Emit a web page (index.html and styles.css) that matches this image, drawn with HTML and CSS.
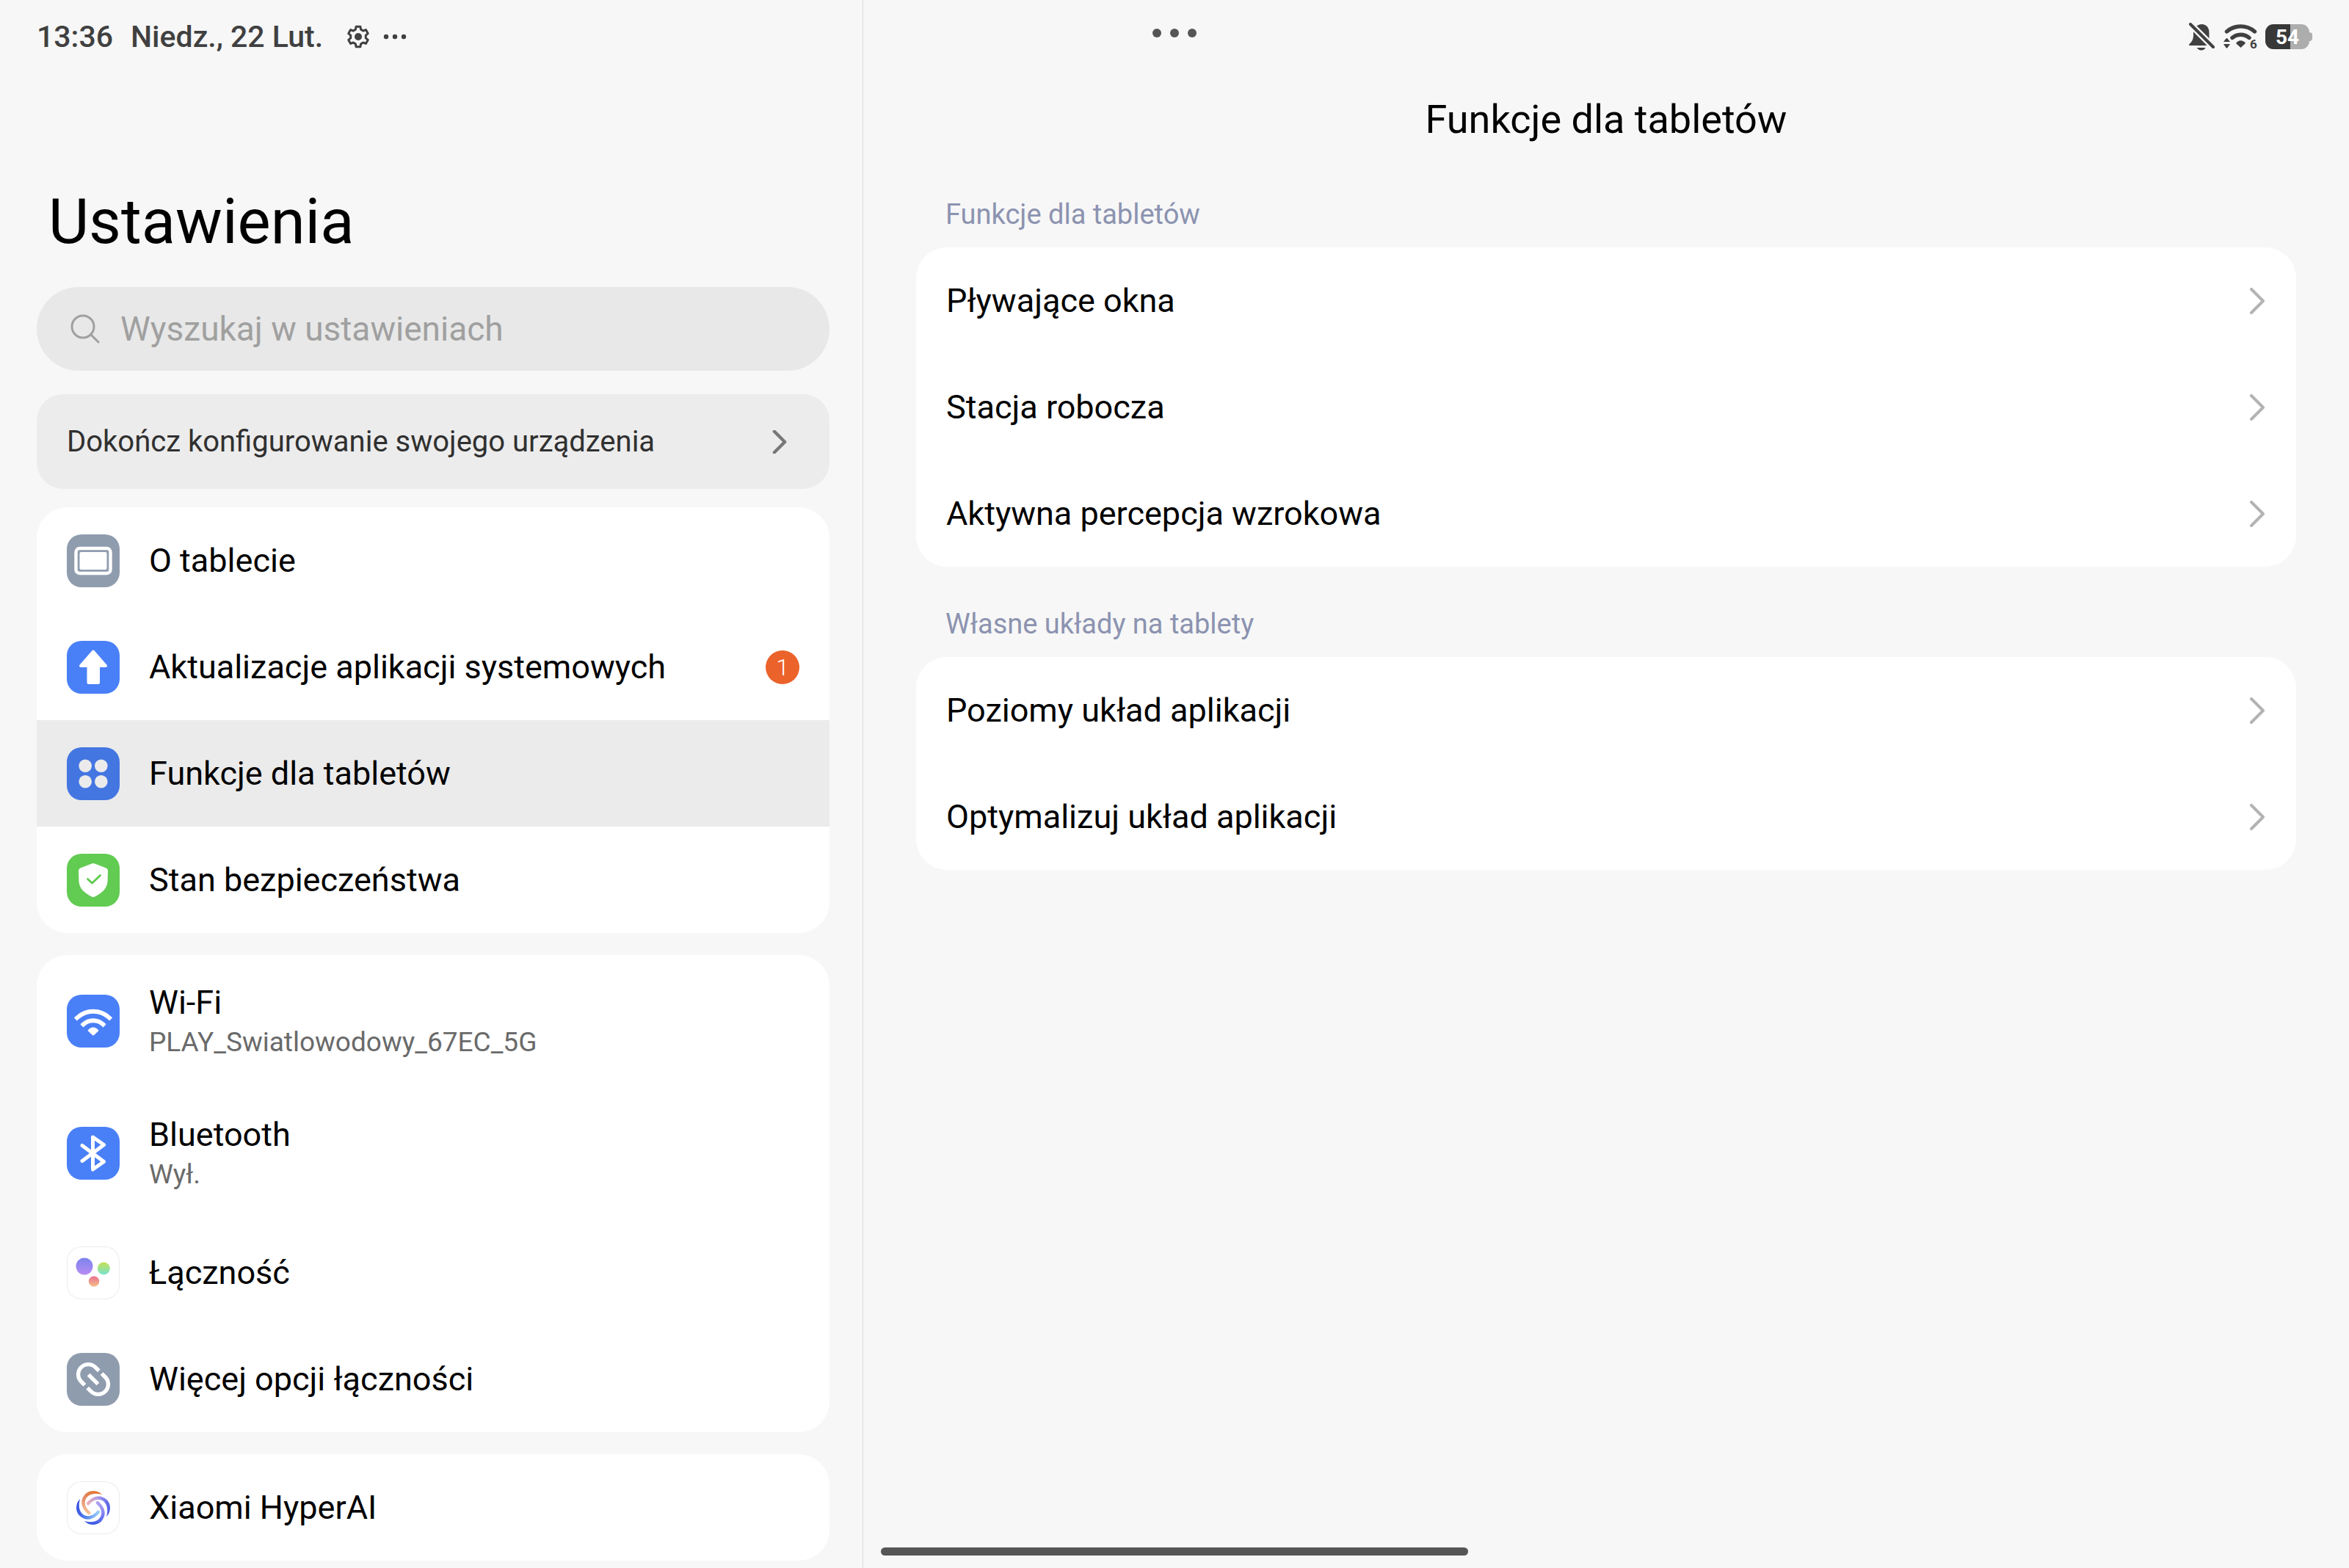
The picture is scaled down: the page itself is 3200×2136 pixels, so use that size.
FILE: index.html
```
<!DOCTYPE html>
<html lang="pl">
<head>
  <meta charset="UTF-8">
  <meta name="viewport" content="width=device-width, initial-scale=1.0">
  <title>Ustawienia</title>
  <link rel="stylesheet" href="styles.css">
</head>
<body>
  <!-- Shared shapes -->
  <svg class="defs" aria-hidden="true">
    <symbol id="chevron" viewBox="0 0 20 36">
      <path d="M2 2L18 18L2 34" fill="none" stroke="currentColor" stroke-linecap="round" stroke-linejoin="round"/>
    </symbol>
  </svg>

  <!-- Left panel -->
  <aside class="sidebar">
    <div class="status">
      <time class="clock">13:36</time>
      <span class="date">Niedz., 22 Lut.</span>
      <svg class="status-gear" viewBox="-16 -16 32 32" aria-hidden="true">
        <path d="M-2.9-13.7H2.9L3.6-9.9L6.7-8L10.4-9.4L13.3-4.3L10.3-1.8V1.8L13.3 4.3L10.4 9.4L6.7 8L3.6 9.9L2.9 13.7H-2.9L-3.6 9.9L-6.7 8L-10.4 9.4L-13.3 4.3L-10.3 1.8V-1.8L-13.3-4.3L-10.4-9.4L-6.7-8L-3.6-9.9Z" fill="none" stroke="currentColor" stroke-width="3" stroke-linejoin="round"/>
        <circle r="5" fill="currentColor"/>
      </svg>
      <svg class="status-more" viewBox="0 0 32 8" aria-hidden="true">
        <circle cx="4" cy="4" r="3.2" fill="currentColor"/>
        <circle cx="16" cy="4" r="3.2" fill="currentColor"/>
        <circle cx="28" cy="4" r="3.2" fill="currentColor"/>
      </svg>
    </div>

    <h1>Ustawienia</h1>

    <label class="search">
      <svg class="search-icon" viewBox="0 0 40 40" aria-hidden="true">
        <circle cx="17" cy="17" r="15" fill="none" stroke="currentColor" stroke-width="3"/>
        <path d="M28 28L38 38" stroke="currentColor" stroke-width="3" stroke-linecap="round"/>
      </svg>
      <input type="search" placeholder="Wyszukaj w ustawieniach" aria-label="Wyszukaj w ustawieniach">
    </label>

    <a class="setup" href="#">
      <span>Dokończ konfigurowanie swojego urządzenia</span>
      <svg class="setup-chevron" aria-hidden="true"><use href="#chevron"/></svg>
    </a>

    <nav>
      <div class="card">
        <a class="row" href="#">
          <svg class="icon gray" viewBox="0 0 72 72" aria-hidden="true">
            <rect x="12.5" y="19" width="47" height="34" rx="5" fill="none" stroke="#fff" stroke-width="4.4"/>
            <rect x="17.5" y="24" width="37" height="24" rx="2" fill="#fff"/>
          </svg>
          <span class="label">O tablecie</span>
        </a>
        <a class="row" href="#">
          <svg class="icon blue" viewBox="0 0 72 72" aria-hidden="true">
            <path d="M36 14.5L53 34H43V57H29.5V34H19Z" fill="#fff" stroke="#fff" stroke-width="4" stroke-linejoin="round"/>
          </svg>
          <span class="label">Aktualizacje aplikacji systemowych</span>
          <span class="badge">1</span>
        </a>
        <a class="row selected" href="#" aria-current="page">
          <svg class="icon blue-dark" viewBox="0 0 72 72" aria-hidden="true">
            <g fill="#ebebeb">
              <circle cx="25.2" cy="25.2" r="8.8"/>
              <circle cx="46.8" cy="25.2" r="8.8"/>
              <circle cx="25.2" cy="46.8" r="8.8"/>
              <circle cx="46.8" cy="46.8" r="8.8"/>
            </g>
          </svg>
          <span class="label">Funkcje dla tabletów</span>
        </a>
        <a class="row" href="#">
          <svg class="icon green" viewBox="0 0 72 72" aria-hidden="true">
            <path d="M34 13.6Q36 12.6 38 13.6L53 19.2Q56 20.4 56 23.5L55.6 37C55.2 48 47 54 38 58.4Q36 59.4 34 58.4C25 54 16.8 48 16.4 37L16 23.5Q16 20.4 19 19.2Z" fill="#fff"/>
            <path d="M28.5 34.5L34.5 40L45.5 29.5" fill="none" stroke="#62cb52" stroke-width="3" stroke-linecap="round" stroke-linejoin="round"/>
          </svg>
          <span class="label">Stan bezpieczeństwa</span>
        </a>
      </div>

      <div class="card">
        <a class="row tall" href="#">
          <svg class="icon blue" viewBox="0 0 72 72" aria-hidden="true">
            <path d="M14 31.5A32 32 0 0 1 58 31.5M22.500 40.500A20 20 0 0 1 49.500 40.500" fill="none" stroke="#fff" stroke-width="5.8" stroke-linecap="square"/>
            <path d="M28.500 49C32 43 40 43 43.500 49L37.500 54.800Q36 56 34.500 54.800Z" fill="#fff"/>
          </svg>
          <span class="label">Wi-Fi<small>PLAY_Swiatlowodowy_67EC_5G</small></span>
        </a>
        <a class="row tall" href="#">
          <svg class="icon blue" viewBox="0 0 72 72" aria-hidden="true">
            <path d="M21 25.500L50.500 47.500L35.500 58V14L50.500 24.500L21 46.500" fill="none" stroke="#fff" stroke-width="5" stroke-linecap="round" stroke-linejoin="round"/>
          </svg>
          <span class="label">Bluetooth<small>Wył.</small></span>
        </a>
        <a class="row" href="#">
          <svg class="icon outlined" viewBox="0 0 72 72" aria-hidden="true">
            <defs>
              <linearGradient id="violet" x2="0" y2="1"><stop stop-color="#7b83ec"/><stop offset="1" stop-color="#b88cf5"/></linearGradient>
              <linearGradient id="lime" x2="0" y2="1"><stop stop-color="#c6e052"/><stop offset="1" stop-color="#74e3d0"/></linearGradient>
              <linearGradient id="coral" x2="0" y2="1"><stop stop-color="#e9708f"/><stop offset="1" stop-color="#f5c08a"/></linearGradient>
            </defs>
            <circle cx="24" cy="27" r="11.5" fill="url(#violet)"/>
            <circle cx="50.3" cy="30" r="8.5" fill="url(#lime)"/>
            <circle cx="37" cy="47.6" r="7.2" fill="url(#coral)"/>
          </svg>
          <span class="label">Łączność</span>
        </a>
        <a class="row" href="#">
          <svg class="icon gray" viewBox="0 0 72 72" aria-hidden="true">
            <g fill="none" stroke="#fff" stroke-width="5.4">
              <path d="M43.8 24.4L39 19.6A13.7 13.7 0 0 0 19.6 39L24.4 43.8"/>
              <path d="M47.6 28.2L52.4 33A13.7 13.7 0 0 1 33 52.4L28.2 47.6"/>
              <path d="M29.6 29.600L42.400 42.400"/>
            </g>
          </svg>
          <span class="label">Więcej opcji łączności</span>
        </a>
      </div>

      <div class="card">
        <a class="row" href="#">
          <svg class="icon outlined" viewBox="0 0 72 72" aria-hidden="true">
            <defs>
              <linearGradient id="arm-orange" x1=".6" y1="0" x2=".4" y2="1"><stop stop-color="#e2762e"/><stop offset=".4" stop-color="#e58d6c"/><stop offset="1" stop-color="#f7c49a"/></linearGradient>
              <linearGradient id="arm-pink" x1=".6" y1="0" x2=".4" y2="1"><stop stop-color="#4a5be6"/><stop offset=".5" stop-color="#9c93ec"/><stop offset="1" stop-color="#f0b3b3"/></linearGradient>
              <linearGradient id="arm-violet" x1=".6" y1="0" x2=".4" y2="1"><stop stop-color="#3858e0"/><stop offset=".5" stop-color="#7a7ff0"/><stop offset="1" stop-color="#b3a5f0"/></linearGradient>
              <linearGradient id="arm-blue" x1=".6" y1="0" x2=".4" y2="1"><stop stop-color="#3a50e0"/><stop offset=".5" stop-color="#5487ee"/><stop offset="1" stop-color="#9fd3fa"/></linearGradient>
              <path id="arm" d="M12-18C7-24-5-25-11-18.500C-18.500-10-17-1-7.500 8.500A2.200 2.200 0 0 0-4.300 5.300C-12.500-1-13-9.500-8-15C-3-20 5-20 12-18Z"/>
            </defs>
            <g transform="translate(36 36)">
              <use href="#arm" fill="url(#arm-orange)"/>
              <use href="#arm" fill="url(#arm-pink)" transform="rotate(90)"/>
              <use href="#arm" fill="url(#arm-violet)" transform="rotate(180)"/>
              <use href="#arm" fill="url(#arm-blue)" transform="rotate(270)"/>
            </g>
          </svg>
          <span class="label">Xiaomi HyperAI</span>
        </a>
      </div>
    </nav>
  </aside>

  <!-- Right panel -->
  <main class="content">
    <div class="status status-end">
      <svg class="status-bell" viewBox="0 0 36 38" aria-hidden="true">
        <path d="M17.5 2C24 2 27.5 7 27.5 13V21L29 31H1.5C-.5 31 0 29.5 1 28.5C4.5 25 6 22 6 17V13C6 7 11 2 17.5 2Z" fill="currentColor"/>
        <path d="M11 34H22.5C21 38.5 12.5 38.5 11 34Z" fill="currentColor"/>
        <path d="M0 0L36 36" stroke="#f7f7f7" stroke-width="9"/>
        <path d="M2 2L33 33" stroke="currentColor" stroke-width="4" stroke-linecap="round"/>
      </svg>
      <svg class="status-wifi" viewBox="0 0 46 36" aria-label="Wi-Fi 6">
        <path d="M4.500 11A29 29 0 0 1 42.500 11M12 19.500A17.500 17.500 0 0 1 35 19.500" fill="none" stroke="currentColor" stroke-width="5.4" stroke-linecap="round"/>
        <path d="M17 27C20 22 27 22 30 27L23.500 33Z" fill="currentColor"/>
        <path d="M0 25L3.500 20.500Q4.500 19.500 5.500 20.500L9 25ZM0 28L3.500 33Q4.500 34 5.500 33L9 28Z" fill="currentColor"/>
        <text x="36" y="34" font-size="17" font-weight="700" fill="currentColor">6</text>
      </svg>
      <span class="battery">54</span>
    </div>

    <h2>Funkcje dla tabletów</h2>

    <section>
      <h3>Funkcje dla tabletów</h3>
      <div class="card">
        <a class="row" href="#"><span class="label">Pływające okna</span><svg class="chevron" aria-hidden="true"><use href="#chevron"/></svg></a>
        <a class="row" href="#"><span class="label">Stacja robocza</span><svg class="chevron" aria-hidden="true"><use href="#chevron"/></svg></a>
        <a class="row" href="#"><span class="label">Aktywna percepcja wzrokowa</span><svg class="chevron" aria-hidden="true"><use href="#chevron"/></svg></a>
      </div>
    </section>

    <section>
      <h3>Własne układy na tablety</h3>
      <div class="card">
        <a class="row" href="#"><span class="label">Poziomy układ aplikacji</span><svg class="chevron" aria-hidden="true"><use href="#chevron"/></svg></a>
        <a class="row" href="#"><span class="label">Optymalizuj układ aplikacji</span><svg class="chevron" aria-hidden="true"><use href="#chevron"/></svg></a>
      </div>
    </section>
  </main>

  <!-- System controls on top of both panels -->
  <button class="window-menu" type="button" aria-label="Menu okna"><i></i><i></i><i></i></button>
  <div class="home-bar"></div>
</body>
</html>
```
FILE: styles.css
```
/* Global Styles */
* {
  box-sizing: border-box;
}

body {
  font-family: Roboto, "Noto Sans", sans-serif;
  background: #f7f7f7;
  color: #000;
  margin: 0;
  height: 100vh;
  overflow: hidden;
  display: grid;
  grid-template-columns: 147fr 253fr;
  position: relative;
}

a {
  color: inherit;
  text-decoration: none;
}

h1,
h2,
h3 {
  font-weight: 400;
  margin: 0;
}

.defs {
  position: absolute;
  width: 0;
  height: 0;
}

/* Panels */
.sidebar {
  padding: 0 45px 0 50px;
  border-right: 1px solid #dcdcdc;
  overflow: hidden;
}

.content {
  padding: 0 72px;
}

/* Status Bar */
.status {
  display: flex;
  align-items: center;
  height: 100px;
  color: #404040;
  font-size: 41px;
  font-weight: 500;
}

.date {
  margin-left: 24px;
}

.status-gear {
  width: 32px;
  height: 32px;
  margin-left: 32px;
}

.status-more {
  width: 32px;
  height: 8px;
  margin-left: 18px;
}

.status-end {
  justify-content: flex-end;
  gap: 11px;
  margin-right: -22px;
}

.status-bell {
  width: 36px;
  height: 38px;
}

.status-wifi {
  width: 46px;
  height: 36px;
  overflow: visible;
}

.battery {
  position: relative;
  width: 60px;
  height: 34px;
  margin-right: 4px;
  border-radius: 11px;
  background: linear-gradient(90deg, #383838 34px, #adadad 34px);
  color: #fff;
  font-size: 28px;
  font-weight: 700;
  line-height: 35px;
  text-align: center;
}

.battery::after {
  content: "";
  position: absolute;
  left: 60px;
  top: 11px;
  width: 4px;
  height: 12px;
  border-radius: 0 4px 4px 0;
  background: #adadad;
}

/* Sidebar Header */
h1 {
  font-size: 85px;
  line-height: 96px;
  margin: 154px 16px 41px;
}

.search {
  display: flex;
  align-items: center;
  gap: 28px;
  height: 114px;
  padding: 0 46px;
  border-radius: 57px;
  background: #e8e8e8;
  color: #a0a0a0;
}

.search-icon {
  width: 40px;
  height: 40px;
}

.search input {
  flex: 1;
  min-width: 0;
  padding: 0;
  border: none;
  outline: none;
  background: none;
  font: inherit;
  font-size: 46px;
  color: #000;
}

.search input::placeholder {
  color: #a0a0a0;
}

.setup {
  display: flex;
  align-items: center;
  justify-content: space-between;
  height: 129px;
  margin: 32px 0 25px;
  padding: 0 58px 0 41px;
  border-radius: 36px;
  background: #ececec;
  color: #303030;
  font-size: 40px;
}

.setup-chevron {
  width: 20px;
  height: 32px;
  color: #777;
  stroke-width: 5px;
}

/* Cards */
.card {
  border-radius: 42px;
  background: #fff;
  overflow: hidden;
}

nav .card {
  margin-bottom: 30px;
}

.row {
  display: flex;
  align-items: center;
  gap: 40px;
  height: 145px;
  padding: 0 41px;
  font-size: 45px;
}

.content .row {
  padding-right: 43px;
}

.row.tall {
  height: 180px;
}

.row.selected {
  background: #ebebeb;
}

.label {
  flex: 1;
  line-height: 58px;
}

.label small {
  display: block;
  color: #6a6a6a;
  font-size: 37px;
  line-height: 50px;
}

.chevron {
  width: 20px;
  height: 36px;
  color: #b3b3b3;
  stroke-width: 4px;
}

.badge {
  width: 46px;
  height: 46px;
  border-radius: 50%;
  background: #eb622a;
  color: #fff;
  font-size: 32px;
  font-weight: 300;
  line-height: 46px;
  text-align: center;
}

/* Row Icons */
.icon {
  width: 72px;
  height: 72px;
  border-radius: 20px;
}

.gray {
  background: #8f9cae;
}

.blue {
  background: #4a80f7;
}

.blue-dark {
  background: #4476e2;
}

.green {
  background: #62cb52;
}

.outlined {
  box-shadow: inset 0 0 0 1px #ececec;
}

/* Content */
h2 {
  font-size: 54px;
  line-height: 126px;
  margin-bottom: 44px;
  text-align: center;
}

h3 {
  color: #8c93b0;
  font-size: 38px;
  line-height: 44px;
  margin: 0 40px 23px;
}

section {
  margin-bottom: 56px;
}

/* Overlays */
.window-menu {
  position: absolute;
  top: 32px;
  left: 50%;
  transform: translateX(-50%);
  display: flex;
  gap: 12px;
  padding: 7px;
  border: none;
  background: none;
}

.window-menu i {
  width: 12px;
  height: 12px;
  border-radius: 50%;
  background: #555;
}

.home-bar {
  position: absolute;
  bottom: 17px;
  left: 50%;
  transform: translateX(-50%);
  width: 25%;
  height: 11px;
  border-radius: 6px;
  background: #555;
}
```
